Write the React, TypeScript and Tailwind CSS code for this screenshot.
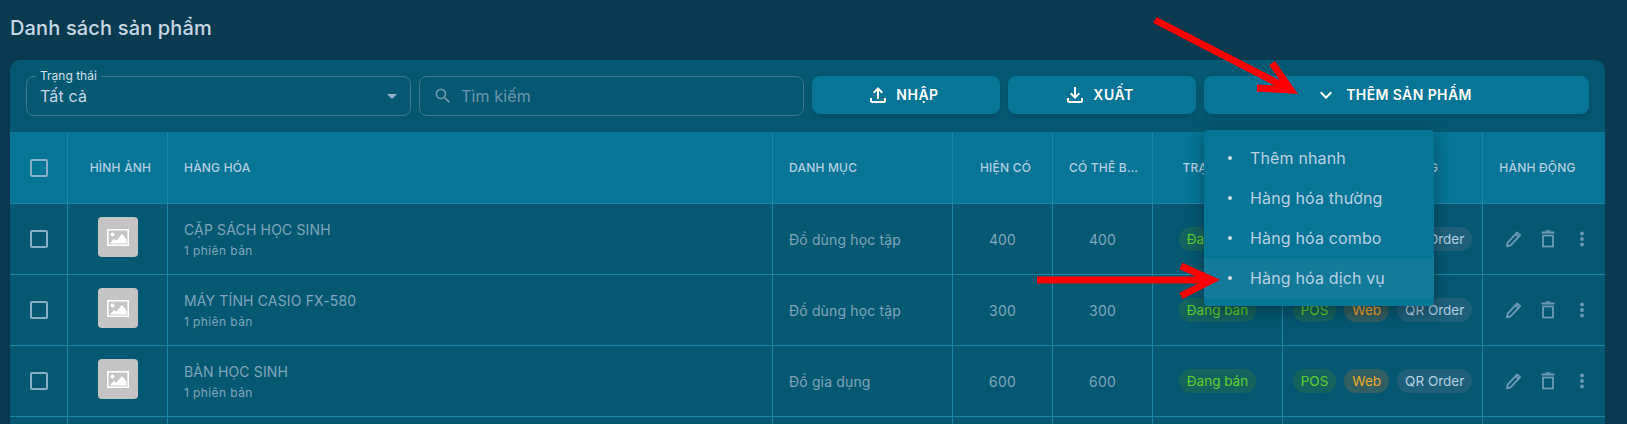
import { MdArrowDropDown, MdKeyboardArrowDown, MdOutlineFileDownload, MdOutlineFileUpload, MdSearch } from "react-icons/md";

const products = [
  { name: "CẶP SÁCH HỌC SINH", category: "Đồ dùng học tập", stock: 400 },
  { name: "MÁY TÍNH CASIO FX-580", category: "Đồ dùng học tập", stock: 300 },
  { name: "BÀN HỌC SINH", category: "Đồ gia dụng", stock: 600 },
];

const menuItems = ["Thêm nhanh", "Hàng hóa thường", "Hàng hóa combo", "Hàng hóa dịch vụ"];

const gridCols = "grid grid-cols-[58px_100px_605px_180px_100px_100px_130px_200px_1fr]";
const cell = "flex items-center border-r border-[#1a85a6] last:border-r-0";
const headText = "text-xs font-medium tracking-[0.2px] text-[#b4cfe0]";
const bodyText = "pt-0.5 text-sm tracking-[0.15px] text-[#7fa6bc]";

function Checkbox() {
  return <div className="h-[18px] w-[18px] rounded-[2px] border-2 border-[#86afc6]" />;
}

function Thumb() {
  return (
    <div className="mb-1 flex h-10 w-10 items-center justify-center rounded bg-[#c4c4c4]">
      <svg width="22" height="17" viewBox="0 0 22 17">
        <rect x="0.8" y="0.8" width="20.4" height="15.4" fill="none" stroke="#fff" strokeWidth="1.6" />
        <circle cx="5.5" cy="5.5" r="2" fill="#fff" />
        <path d="M2.5 14.5l4.5-4.5 2.5 1.5L15 5l4.5 5.5v4z" fill="#fff" />
      </svg>
    </div>
  );
}

function PencilIcon() {
  return (
    <svg width="18" height="18" viewBox="0 0 18 18" fill="none" stroke="currentColor" strokeWidth="1.9">
      <path d="M2 16.2l.7-3.6L12.2 2.4l3 2.7L5.6 15.4z" strokeLinejoin="round" />
      <path d="M10.6 4.2l3 2.7" />
    </svg>
  );
}

function TrashIcon() {
  return (
    <svg width="18" height="18" viewBox="0 0 18 18" fill="none" stroke="currentColor" strokeWidth="2">
      <path d="M2.5 2.5h13" />
      <path d="M6.5 1h5" strokeWidth="1.4" />
      <rect x="4" y="5.5" width="10" height="11" strokeWidth="1.8" />
    </svg>
  );
}

function DotsIcon() {
  return (
    <svg width="18" height="18" viewBox="0 0 18 18" fill="currentColor">
      <circle cx="9" cy="3.5" r="1.9" />
      <circle cx="9" cy="9" r="1.9" />
      <circle cx="9" cy="14.5" r="1.9" />
    </svg>
  );
}

function Chip({ label, color, bg }: { label: string; color: string; bg: string }) {
  return <span className={`flex h-6 items-center rounded-full px-2 pt-px text-[13.5px] ${color} ${bg}`}>{label}</span>;
}

function Row({ name, category, stock }: { name?: string; category?: string; stock?: number }) {
  const filled = name !== undefined;
  return (
    <div className={`${gridCols} h-[71px] border-b border-[#1a85a6]`}>
      <div className={`${cell} justify-center`}>{filled && <Checkbox />}</div>
      <div className={`${cell} justify-center`}>{filled && <Thumb />}</div>
      <div className={`${cell} px-4`}>
        {filled && (
          <div className="flex flex-col gap-[3px]">
            <span className="text-sm leading-5 tracking-[0.15px] text-[#7fa6bc]">{name}</span>
            <span className="text-xs leading-4 tracking-[0.4px] text-[#7fa6bc]">1 phiên bản</span>
          </div>
        )}
      </div>
      <div className={`${cell} px-4 ${bodyText}`}>{category}</div>
      <div className={`${cell} justify-center ${bodyText}`}>{stock}</div>
      <div className={`${cell} justify-center ${bodyText}`}>{stock}</div>
      <div className={`${cell} justify-center`}>
        {filled && <Chip label="Đang bán" color="text-[#5fd02c]" bg="bg-[#14635f]" />}
      </div>
      <div className={`${cell} justify-center gap-2`}>
        {filled && (
          <>
            <Chip label="POS" color="text-[#5fd02c]" bg="bg-[#14635f]" />
            <Chip label="Web" color="text-[#f0a92a]" bg="bg-[#325f62]" />
            <Chip label="QR Order" color="text-[#b4cfe0]" bg="bg-[#1e6079]" />
          </>
        )}
      </div>
      <div className={`${cell} justify-center gap-4 pl-[7px] text-[#6c9ab5]`}>
        {filled && (
          <>
            <PencilIcon />
            <TrashIcon />
            <DotsIcon />
          </>
        )}
      </div>
    </div>
  );
}

export default function App() {
  return (
    <div className="relative h-screen overflow-hidden bg-[#093a50] pl-2.5 pr-[22px] font-['Inter',sans-serif]">
      <h1 className="flex h-[60px] items-center pb-1 text-xl font-medium tracking-[0.15px] text-[#c6d7e6]">Danh sách sản phẩm</h1>

      <div className="h-[400px] rounded-t-[10px] bg-[#055872]">
        <div className="flex gap-2 p-4">
          <div className="relative flex h-10 w-[385px] items-center justify-between rounded-lg border border-[#3d7891] pl-[13px] pr-[6px] text-[#c6d7e6]">
            <span className="absolute -top-[9px] left-[9px] bg-[#055872] px-1 text-xs text-[#d4e2ec]">Trạng thái</span>
            <span className="text-base tracking-[0.15px]">Tất cả</span>
            <MdArrowDropDown size={24} className="text-[#8fb0c4]" />
          </div>
          <div className="flex h-10 w-[385px] items-center gap-2 rounded-lg border border-[#3d7891] pl-[13px] text-[#6a97ae]">
            <MdSearch size={20} />
            <span className="text-base tracking-[0.15px]">Tìm kiếm</span>
          </div>
          <button className="flex h-[38px] w-[188px] items-center justify-center gap-1.5 rounded-lg bg-[#067596] pr-[7px] text-sm font-semibold tracking-[0.5px] text-white shadow-md">
            <MdOutlineFileUpload size={24} />
            NHẬP
          </button>
          <button className="flex h-[38px] w-[188px] items-center justify-center gap-1.5 rounded-lg bg-[#067596] pr-[7px] text-sm font-semibold tracking-[0.5px] text-white shadow-md">
            <MdOutlineFileDownload size={24} />
            XUẤT
          </button>
          <button className="flex h-[38px] flex-1 items-center justify-center gap-2 rounded-lg bg-[#067596] pr-[7px] text-sm font-semibold tracking-[0.4px] text-white shadow-md">
            <MdKeyboardArrowDown size={24} />
            THÊM SẢN PHẨM
          </button>
        </div>

        <div className={`${gridCols} h-[72px] border-b border-[#1a85a6] bg-[#067596]`}>
          <div className={`${cell} justify-center`}>
            <Checkbox />
          </div>
          <div className={`${cell} justify-center pl-1.5 ${headText}`}>HÌNH ẢNH</div>
          <div className={`${cell} px-4 ${headText}`}>HÀNG HÓA</div>
          <div className={`${cell} px-4 ${headText}`}>DANH MỤC</div>
          <div className={`${cell} justify-center pl-1.5 ${headText}`}>HIỆN CÓ</div>
          <div className={`${cell} pl-4 pr-3 ${headText}`}>
            <span className="truncate">CÓ THỂ BÁN</span>
          </div>
          <div className={`${cell} justify-center pl-1.5 ${headText}`}>TRẠNG THÁI</div>
          <div className={`${cell} justify-center pl-2 ${headText}`}>KÊNH BÁN HÀNG</div>
          <div className={`${cell} justify-center pr-[13px] ${headText}`}>HÀNH ĐỘNG</div>
        </div>

        {products.map((p) => (
          <Row key={p.name} {...p} />
        ))}
        <Row />
      </div>

      {/* dropdown opened from the add product button */}
      <ul className="absolute left-[1204px] top-[130px] w-[230px] rounded bg-[#067596] py-2 text-base tracking-[0.15px] text-[#b9d1e2] shadow-[0_5px_16px_rgba(0,0,0,0.35)]">
        {menuItems.map((item, i) => (
          <li key={item} className={`flex h-10 items-center gap-[18px] pl-6 ${i === 3 ? "bg-[#147a9a]" : ""}`}>
            <span className="h-1 w-1 rounded-full bg-[#d4e2ec]" />
            {item}
          </li>
        ))}
      </ul>

      {/* red annotation arrows */}
      <svg className="pointer-events-none absolute left-0 top-0" width="1627" height="424" viewBox="0 0 1627 424">
        <g fill="none" stroke="#ff0000" strokeWidth="7">
          <path d="M1155 20L1287 88" />
          <path d="M1272 63L1291 90L1257 88" />
          <path d="M1037 280H1212" />
          <path d="M1181 266L1212 280L1181 296" />
        </g>
      </svg>
    </div>
  );
}
